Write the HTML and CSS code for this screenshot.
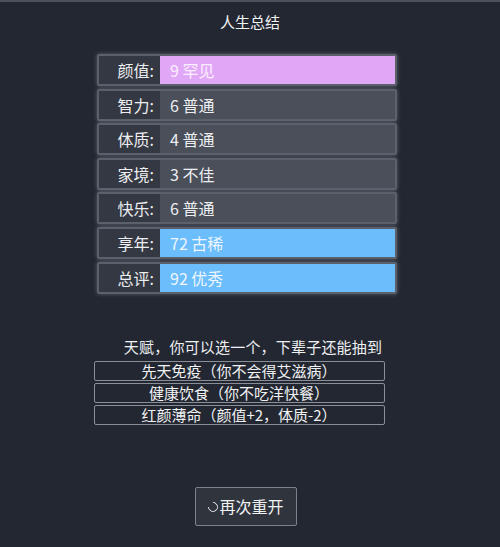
FILE: index.html
```html
<!DOCTYPE html>
<html lang="zh">
<head>
<meta charset="utf-8">
<link rel="stylesheet" href="styles.css">
</head>
<body>
<div class="topline"></div>
<main class="page">
  <h1 class="title">人生总结</h1>
  <ul class="stats">
    <li class="row pink"><span class="label">颜值:</span><span class="value">9 罕见</span></li>
    <li class="row"><span class="label">智力:</span><span class="value">6 普通</span></li>
    <li class="row"><span class="label">体质:</span><span class="value">4 普通</span></li>
    <li class="row"><span class="label">家境:</span><span class="value">3 不佳</span></li>
    <li class="row"><span class="label">快乐:</span><span class="value">6 普通</span></li>
    <li class="row blue"><span class="label">享年:</span><span class="value">72 古稀</span></li>
    <li class="row blue"><span class="label">总评:</span><span class="value">92 优秀</span></li>
  </ul>
  <section class="talents">
    <div class="talents-title">天赋，你可以选一个，下辈子还能抽到</div>
    <ul class="talent-list">
      <li class="talent">先天免疫（你不会得艾滋病）</li>
      <li class="talent">健康饮食（你不吃洋快餐）</li>
      <li class="talent">红颜薄命（颜值+2，体质-2）</li>
    </ul>
  </section>
  <div class="actions">
    <button class="restart"><span class="ring"></span>再次重开</button>
  </div>
</main>
</body>
</html>
```

FILE: styles.css
```css
* { box-sizing: border-box; }
html, body {
  margin: 0;
  padding: 0;
  background: #232731;
  color: #eef0f3;
  font-family: "Noto Sans CJK SC", "Noto Sans", sans-serif;
}
body { width: 500px; height: 547px; overflow: hidden; }
.topline { height: 2px; background: #4b5059; }
.page { display: flex; flex-direction: column; align-items: center; }
.title {
  margin: 9px 0 0;
  font-size: 15px;
  font-weight: normal;
  line-height: 22px;
  color: #f2f3f5;
}
.stats {
  list-style: none;
  margin: 21px 0 0;
  padding: 0;
  width: 300px;
  margin-left: -6px;
  display: flex;
  flex-direction: column;
  gap: 2.6px;
}
.row {
  display: flex;
  height: 32px;
  border: 2px solid #5b606a;
  border-radius: 2px;
  box-shadow: 0 0 4px rgba(160, 170, 185, 0.45);
  background: #4a4f5a;
  font-size: 16px;
  line-height: 28px;
}
.label {
  width: 61px;
  flex: none;
  background: #343842;
  text-align: right;
  padding-right: 6px;
  color: #eceef1;
}
.value {
  flex: 1;
  padding-left: 10px;
  color: #eceef1;
}
.pink .value { background: #e1a7f7; color: #fbeefe; }
.blue .value { background: #6bbdfc; color: #eef6ff; }
.talents {
  margin-top: 43px;
  display: flex;
  flex-direction: column;
  align-items: center;
}
.talents-title {
  font-size: 15px;
  line-height: 20px;
  margin-left: 6px;
  letter-spacing: 0.2px;
  color: #eef0f3;
}
.talent-list {
  list-style: none;
  margin: 4px 0 0;
  padding: 0;
  width: 291px;
  display: flex;
  flex-direction: column;
  gap: 2px;
  margin-left: -22px;
}
.talent {
  height: 20px;
  border: 1px solid #8a8f97;
  border-radius: 2px;
  text-align: center;
  font-size: 15px;
  line-height: 17px;
  color: #f1f2f4;
}
.actions { margin-top: 62px; }
.restart {
  width: 102px;
  height: 39px;
  margin-left: -8px;
  background: #30343d;
  border: 1px solid #7c818a;
  border-radius: 2px;
  color: #f1f2f4;
  font-family: inherit;
  font-size: 16px;
  display: flex;
  align-items: center;
  justify-content: center;
  padding: 0;
}
.ring {
  display: inline-block;
  width: 10px;
  height: 10px;
  border: 1.5px solid #e8eaee;
  border-radius: 50%;
  border-top-color: transparent;
  transform: rotate(-45deg);
  margin-right: 1px;
  margin-top: 2px;
}
```
